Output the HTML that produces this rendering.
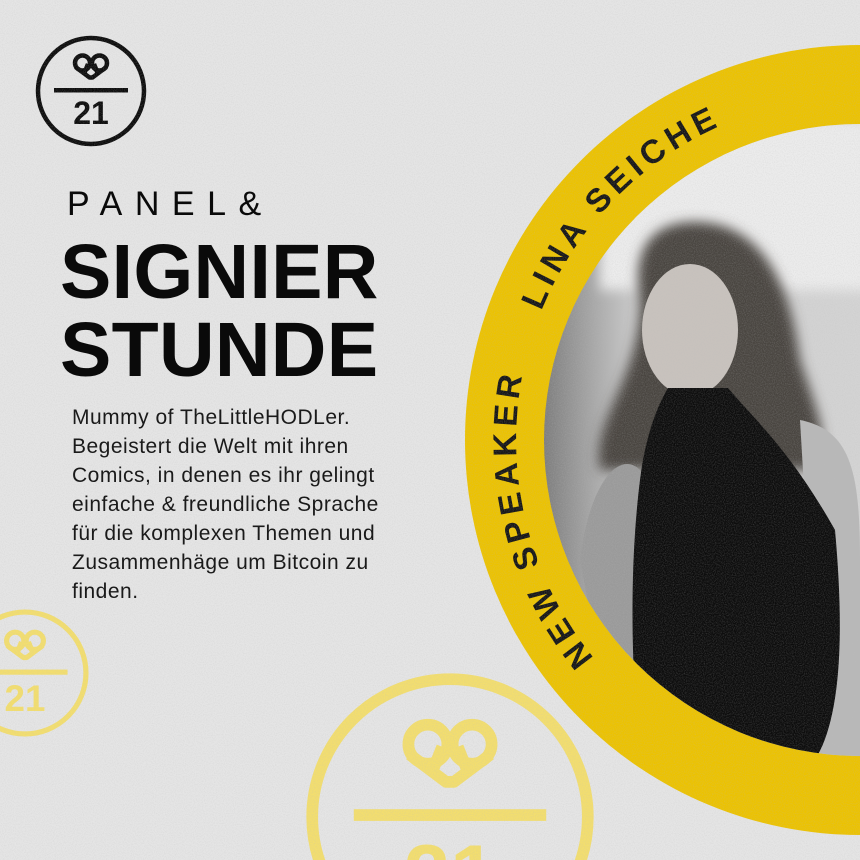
<!DOCTYPE html>
<html><head><meta charset="utf-8"><style>
html,body{margin:0;padding:0}
body{width:860px;height:860px;overflow:hidden;background:#e5e5e5;position:relative;font-family:"Liberation Sans",sans-serif}
.t{position:absolute;color:#0a0a0a}
</style></head><body>
<svg width="860" height="860" style="position:absolute;left:0;top:0">
<defs>
<filter id="n"><feTurbulence type="fractalNoise" baseFrequency="0.9" numOctaves="2" seed="3"/><feColorMatrix values="0 0 0 0 0.5 0 0 0 0 0.5 0 0 0 0 0.5 0 0 0 -1.6 1.0"/></filter>
<filter id="bl"><feGaussianBlur stdDeviation="6"/></filter>
<clipPath id="pc"><circle cx="860" cy="440" r="316"/></clipPath>
<linearGradient id="bg" x1="0" y1="0" x2="1" y2="0"><stop offset="0" stop-color="#7a7a7a"/><stop offset="0.3" stop-color="#cfcfcf"/><stop offset="1" stop-color="#d4d4d4"/></linearGradient>
<g id="logo">
<circle cx="0" cy="0" r="53" fill="none" stroke-width="4.5"/>
<circle cx="-8.5" cy="-28" r="7.5" fill="none" stroke-width="4.5"/>
<circle cx="8.5" cy="-28" r="7.5" fill="none" stroke-width="4.5"/>
<path d="M-15.5,-24 L-1.5,-13.5 L1.5,-13.5 L15.5,-24 M-3,-27 L-7,-17 M3,-27 L7,-17" fill="none" stroke-width="4.5" stroke-linejoin="round"/>
<rect x="-37" y="-3" width="74" height="4.5" stroke="none"/>
<text x="0" y="33" text-anchor="middle" font-family="Liberation Sans" font-weight="bold" font-size="32" stroke="none">21</text>
</g>
<path id="arc" d="M596.5,661 A344,344 0 0 1 742,117"/>
</defs>
<g transform="translate(91,91)" stroke="#0b0b0b" fill="#0b0b0b"><use href="#logo"/></g>
<g transform="translate(25,673) scale(1.15)" stroke="#f3de6e" fill="#f3de6e"><use href="#logo"/></g>
<g transform="translate(450,817) scale(2.6)" stroke="#f3de6e" fill="#f3de6e"><use href="#logo"/></g>
<circle cx="860" cy="440" r="395" fill="#ecc200"/>
<g clip-path="url(#pc)">
<rect x="540" y="120" width="330" height="720" fill="url(#bg)"/>
<rect x="600" y="120" width="270" height="170" fill="#ececec" filter="url(#bl)"/>
<path d="M640,300 C630,240 660,220 700,222 C760,225 790,280 800,360 C820,420 830,440 815,470 L600,470 C590,420 640,380 640,300Z" fill="#4a4440" filter="url(#bl)"/>
<path d="M580,560 C590,480 620,450 640,470 L660,700 L610,720Z" fill="#9a9a9a"/>
<path d="M800,420 C850,430 860,470 860,560 L860,760 L820,760 Z" fill="#b8b8b8"/>
<ellipse cx="690" cy="330" rx="48" ry="66" fill="#c8c2bd"/>
<path d="M668,388 L728,388 C755,420 790,450 835,530 C845,640 840,720 815,760 L640,760 C630,660 630,560 640,480 C645,440 655,410 668,388Z" fill="#0c0c0c"/>
</g>
<text font-family="Liberation Sans" font-size="33" font-weight="bold" fill="#151515"><textPath href="#arc" startOffset="4" textLength="300" lengthAdjust="spacing">NEW SPEAKER</textPath></text>
<text font-family="Liberation Sans" font-size="33" font-weight="bold" fill="#151515"><textPath href="#arc" startOffset="372" textLength="262" lengthAdjust="spacing">LINA SEICHE</textPath></text>
<rect width="860" height="860" filter="url(#n)" opacity="0.3"/>
</svg>
<div class="t" style="left:67px;top:185px;font-size:34px;letter-spacing:12.5px;font-weight:normal">PANEL&amp;</div>
<div class="t" style="left:60px;top:233px;font-size:77px;font-weight:bold;line-height:78px;letter-spacing:0.3px">SIGNIER<br>STUNDE</div>
<div class="t" style="left:72px;top:403px;font-size:21px;line-height:29px;color:#1a1a1a;width:420px;letter-spacing:0.5px">Mummy of TheLittleHODLer.<br>Begeistert die Welt mit ihren<br>Comics, in denen es ihr gelingt<br>einfache &amp; freundliche Sprache<br>für die komplexen Themen und<br>Zusammenhäge um Bitcoin zu<br>finden.</div>
</body></html>
